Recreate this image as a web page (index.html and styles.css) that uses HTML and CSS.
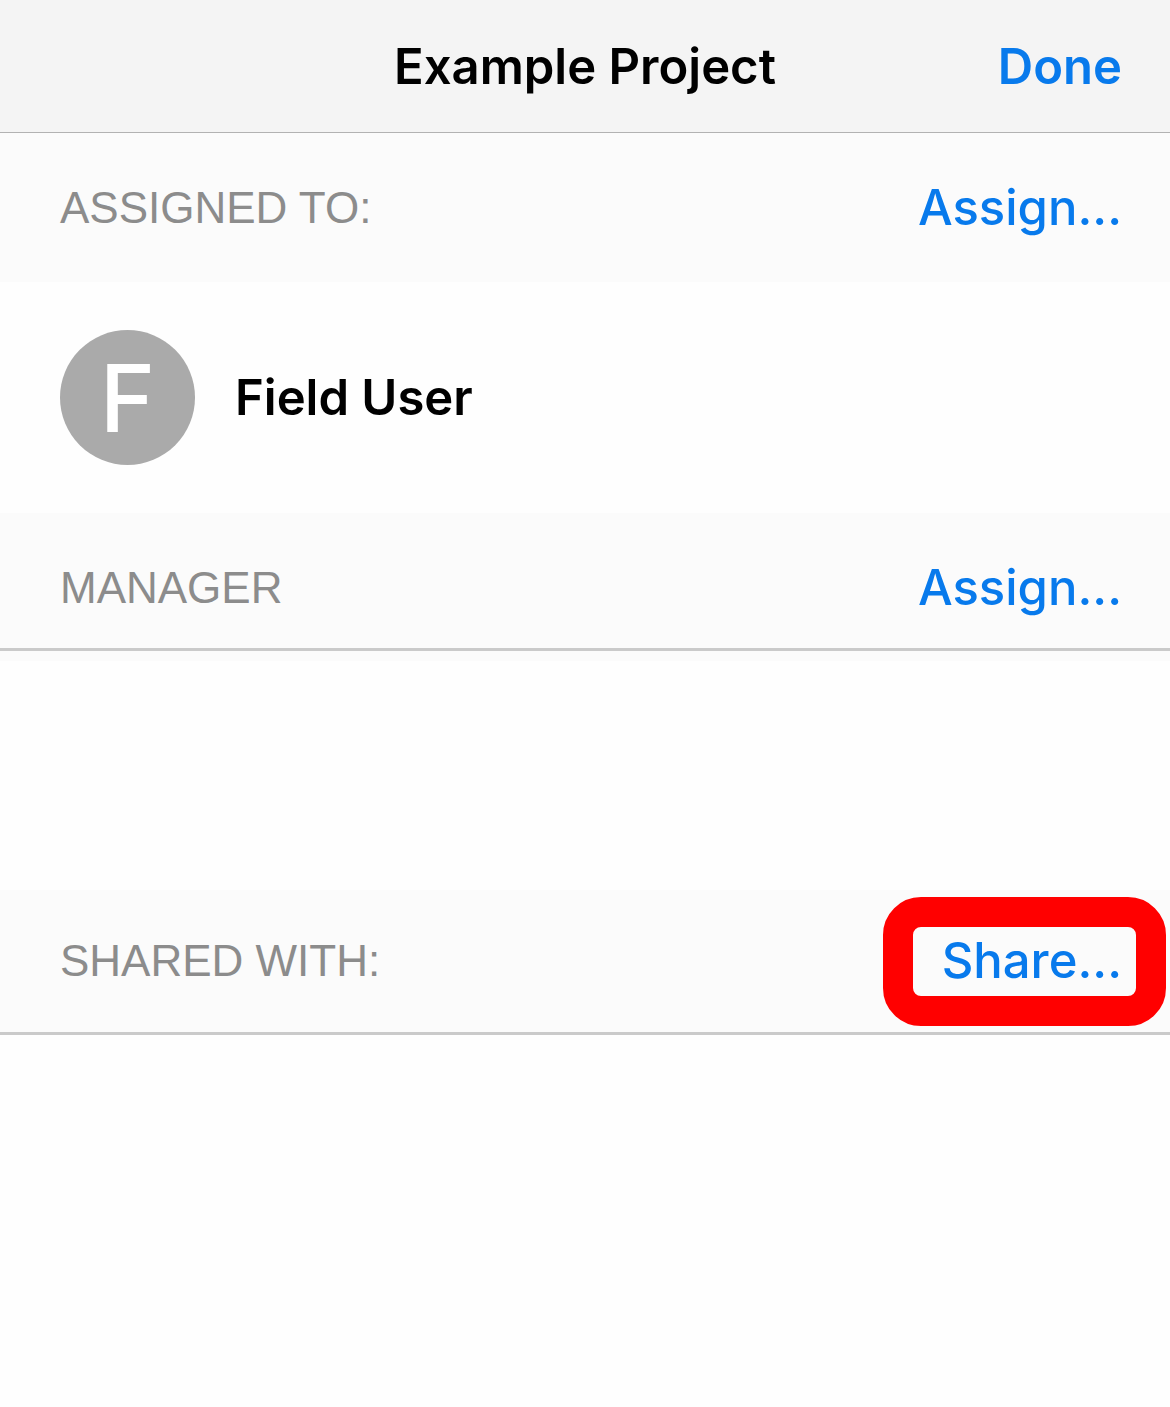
FILE: index.html
```html
<!DOCTYPE html>
<html lang="en">
<head>
    <meta charset="UTF-8">
    <meta name="viewport" content="width=device-width, initial-scale=1.0">
    <title>Example Project</title>
    <link rel="stylesheet" href="styles.css">
</head>
<body>
    <header class="navbar">
        <h1 class="title">Example Project</h1>
        <button type="button" class="action done">Done</button>
    </header>
    <main>
        <section>
            <div class="section-head">
                <h2 class="label">ASSIGNED TO:</h2>
                <button type="button" class="action">Assign...</button>
            </div>
            <div class="user">
                <div class="avatar">F</div>
                <div class="name">Field User</div>
            </div>
        </section>
        <section>
            <div class="section-head lined">
                <h2 class="label">MANAGER</h2>
                <button type="button" class="action">Assign...</button>
            </div>
            <div class="empty"></div>
        </section>
        <section>
            <div class="section-head lined shared">
                <h2 class="label">SHARED WITH:</h2>
                <button type="button" class="action highlight">Share...</button>
            </div>
        </section>
    </main>
</body>
</html>
```
FILE: styles.css
```css
* {
    margin: 0;
    padding: 0;
    box-sizing: border-box;
}
body {
    font-family: Inter, "Liberation Sans", sans-serif;
    background: #fefefe;
    color: #000;
}
.navbar {
    display: grid;
    grid-template-columns: 1fr auto 1fr;
    align-items: center;
    padding: 36px 48px 34px;
    background: #f4f4f4;
    border-bottom: 1px solid #b2b2b2;
}
.title {
    grid-column: 2;
    font-size: 49px;
    line-height: 62px;
    font-weight: 600;
}
.action {
    position: relative;
    border: none;
    background: none;
    color: #087aec;
    font-family: inherit;
    font-size: 49px;
    line-height: 62px;
    font-weight: 500;
    cursor: pointer;
}
.done {
    justify-self: end;
    font-weight: 600;
}
.section-head {
    display: flex;
    justify-content: space-between;
    align-items: center;
    padding: 44px 48px 43px 60px;
    background: #fbfbfb;
}
.lined {
    padding-bottom: 29px;
    border-bottom: 3px solid #cacaca;
}
.shared {
    padding-top: 40px;
    padding-bottom: 40px;
}
.label {
    font-family: "Liberation Sans", Arial, sans-serif;
    font-size: 44px;
    line-height: 62px;
    font-weight: 400;
    color: #8c8c8c;
}
.user {
    display: flex;
    align-items: center;
    gap: 40px;
    padding: 48px 60px;
}
.avatar {
    width: 135px;
    height: 135px;
    border-radius: 50%;
    background: #aaa;
    color: #fff;
    font-size: 94px;
    line-height: 137px;
    font-weight: 500;
    text-align: center;
}
.name {
    font-size: 49px;
    line-height: 62px;
    font-weight: 600;
}
.empty {
    height: 239px;
    border-top: 10px solid #fbfbfb;
}
/* red frame round the share button */
.highlight::after {
    content: "";
    position: absolute;
    top: -33px;
    right: -44px;
    bottom: -34px;
    left: -59px;
    border: 30px solid #f00;
    border-radius: 38px;
    pointer-events: none;
}
```
